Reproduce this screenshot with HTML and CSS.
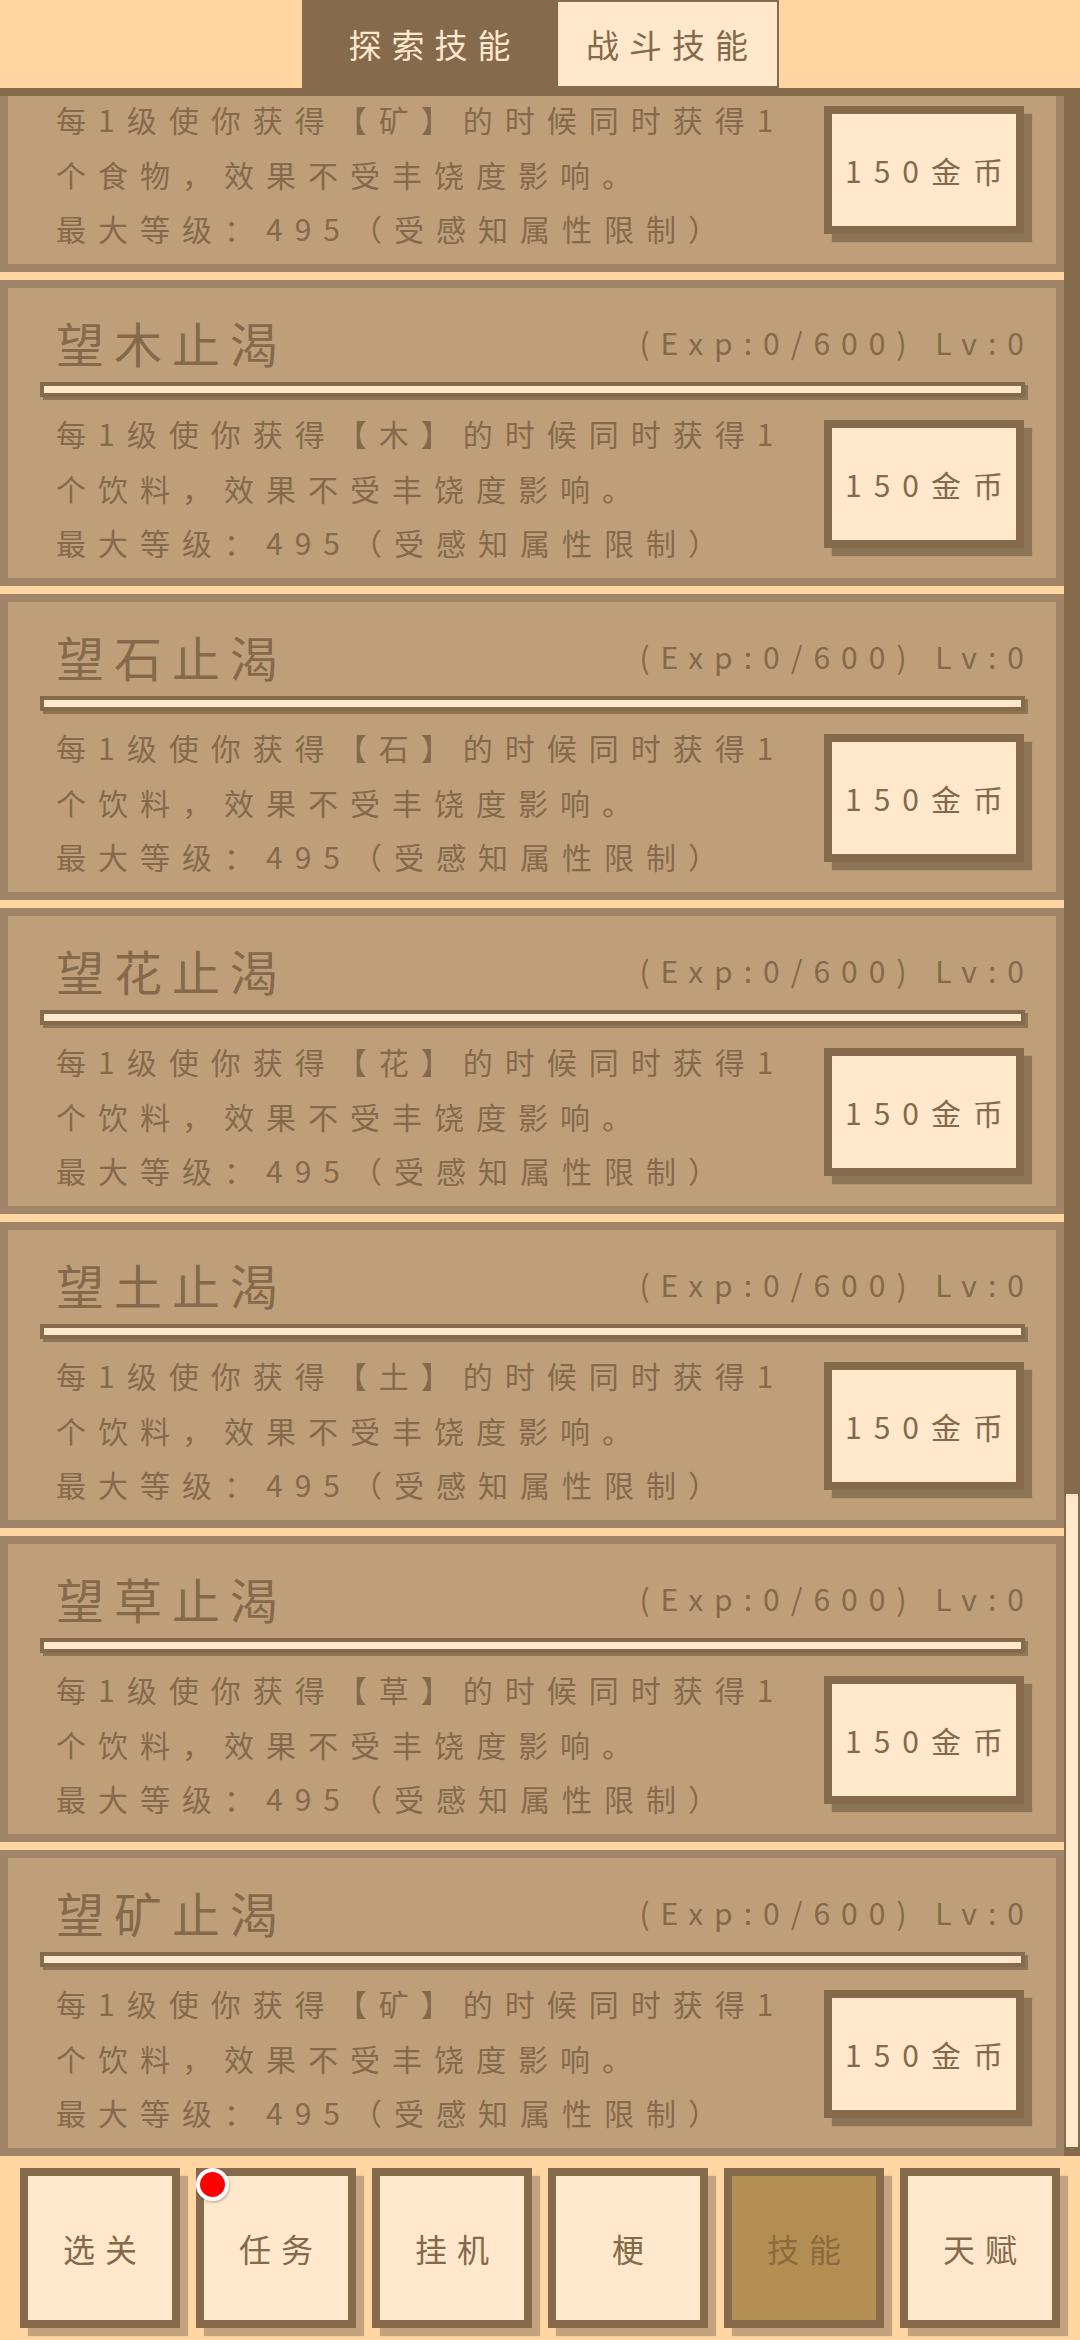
FILE: index.html
```html
<!DOCTYPE html>
<html lang="zh-CN">
<head>
<meta charset="utf-8">
<title>技能</title>
<link rel="stylesheet" href="styles.css">
</head>
<body>
<div class="app">
  <header class="tabs">
    <div class="tab-group">
      <div class="tab tab-active">探索技能</div>
      <div class="tab tab-idle">战斗技能</div>
    </div>
  </header>

  <main class="scroll">
    <div class="scroll-content">
      <section class="skill skill-partial">
        <div class="skill-body">
          <div class="skill-desc"><p class="desc-line">每1级使你获得【矿】的时候同时获得1个食物，效果不受丰饶度影响。</p><p class="desc-line">最大等级：495（受感知属性限制）</p></div>
          <div class="buy-btn">150金币</div>
        </div>
      </section>

      <section class="skill">
        <div class="skill-head"><div class="skill-name">望木止渴</div><div class="skill-exp">(Exp:0/600) Lv:0</div></div>
        <div class="skill-bar"></div>
        <div class="skill-body">
          <div class="skill-desc"><p class="desc-line">每1级使你获得【木】的时候同时获得1个饮料，效果不受丰饶度影响。</p><p class="desc-line">最大等级：495（受感知属性限制）</p></div>
          <div class="buy-btn">150金币</div>
        </div>
      </section>

      <section class="skill">
        <div class="skill-head"><div class="skill-name">望石止渴</div><div class="skill-exp">(Exp:0/600) Lv:0</div></div>
        <div class="skill-bar"></div>
        <div class="skill-body">
          <div class="skill-desc"><p class="desc-line">每1级使你获得【石】的时候同时获得1个饮料，效果不受丰饶度影响。</p><p class="desc-line">最大等级：495（受感知属性限制）</p></div>
          <div class="buy-btn">150金币</div>
        </div>
      </section>

      <section class="skill">
        <div class="skill-head"><div class="skill-name">望花止渴</div><div class="skill-exp">(Exp:0/600) Lv:0</div></div>
        <div class="skill-bar"></div>
        <div class="skill-body">
          <div class="skill-desc"><p class="desc-line">每1级使你获得【花】的时候同时获得1个饮料，效果不受丰饶度影响。</p><p class="desc-line">最大等级：495（受感知属性限制）</p></div>
          <div class="buy-btn">150金币</div>
        </div>
      </section>

      <section class="skill">
        <div class="skill-head"><div class="skill-name">望土止渴</div><div class="skill-exp">(Exp:0/600) Lv:0</div></div>
        <div class="skill-bar"></div>
        <div class="skill-body">
          <div class="skill-desc"><p class="desc-line">每1级使你获得【土】的时候同时获得1个饮料，效果不受丰饶度影响。</p><p class="desc-line">最大等级：495（受感知属性限制）</p></div>
          <div class="buy-btn">150金币</div>
        </div>
      </section>

      <section class="skill">
        <div class="skill-head"><div class="skill-name">望草止渴</div><div class="skill-exp">(Exp:0/600) Lv:0</div></div>
        <div class="skill-bar"></div>
        <div class="skill-body">
          <div class="skill-desc"><p class="desc-line">每1级使你获得【草】的时候同时获得1个饮料，效果不受丰饶度影响。</p><p class="desc-line">最大等级：495（受感知属性限制）</p></div>
          <div class="buy-btn">150金币</div>
        </div>
      </section>

      <section class="skill">
        <div class="skill-head"><div class="skill-name">望矿止渴</div><div class="skill-exp">(Exp:0/600) Lv:0</div></div>
        <div class="skill-bar"></div>
        <div class="skill-body">
          <div class="skill-desc"><p class="desc-line">每1级使你获得【矿】的时候同时获得1个饮料，效果不受丰饶度影响。</p><p class="desc-line">最大等级：495（受感知属性限制）</p></div>
          <div class="buy-btn">150金币</div>
        </div>
      </section>
    </div>
    <div class="scrollbar"><div class="scroll-thumb"></div></div>
  </main>

  <nav class="nav">
    <div class="nav-btn">选关</div>
    <div class="nav-btn">任务<span class="badge"></span></div>
    <div class="nav-btn">挂机</div>
    <div class="nav-btn">梗</div>
    <div class="nav-btn nav-btn-active">技能</div>
    <div class="nav-btn">天赋</div>
  </nav>
</div>
</body>
</html>
```

FILE: styles.css
```css
html, body {
  margin: 0;
  padding: 0;
}

body {
  background: #FFD6A1;
  font-family: "Noto Sans CJK SC", "Noto Sans", sans-serif;
  color: #85694B;
}

.app {
  width: 1080px;
  height: 2340px;
  display: flex;
  flex-direction: column;
  overflow: hidden;
}

/* ---------- top tabs ---------- */
.tabs {
  height: 88px;
  flex-shrink: 0;
  display: flex;
  justify-content: center;
}

.tab-group {
  display: flex;
  background: #856A4B;
  padding: 2px 2px 2px 0;
}

.tab {
  display: flex;
  align-items: center;
  justify-content: center;
  font-size: 33px;
  letter-spacing: 10px;
  padding-left: 10px;
  box-sizing: border-box;
}

.tab-active {
  width: 256px;
  color: #FFE8CC;
}

.tab-idle {
  width: 219px;
  background: #FFE8CC;
  color: #85694B;
}

/* ---------- scroll area ---------- */
.scroll {
  height: 2068px;
  flex-shrink: 0;
  box-sizing: border-box;
  border-top: 8px solid #856A4B;
  background: #856A4B;
  display: flex;
  overflow: hidden;
}

.scroll-content {
  width: 1064px;
  flex-shrink: 0;
  background: #FFD6A1;
  display: flex;
  flex-direction: column;
  gap: 8px;
}

.scrollbar {
  width: 16px;
  flex-shrink: 0;
  padding: 0 2px;
  box-sizing: border-box;
}

.scroll-thumb {
  margin-top: 1398px;
  height: 653px;
  background: #FFE8CC;
}

.skill {
  flex-shrink: 0;
  height: 306px;
  box-sizing: border-box;
  border: 8px solid #A08568;
  background: #BF9F7A;
  padding: 24px 32px 0 48px;
}

/* card scrolled partly out of view: only its lower part shows */
.skill-partial {
  height: 180px;
  border-top: 0;
  padding-top: 0;
  margin-top: -4px;
}

.skill-partial .skill-body {
  margin-top: 0;
}

.skill-head {
  height: 60px;
  display: flex;
  justify-content: space-between;
  align-items: center;
}

.skill-name {
  font-size: 48px;
  letter-spacing: 10px;
  line-height: 60px;
}

.skill-exp {
  font-size: 30px;
  letter-spacing: 11px;
  line-height: 60px;
  margin-right: -11px;
}

.skill-bar {
  height: 15px;
  box-sizing: border-box;
  margin: 10px -1px 0 -16px;
  border: 4px solid #856A4B;
  background: #FFE8CC;
  box-shadow: 3px 3px 0 #8E7557;
}

.skill-body {
  display: flex;
  margin-top: 9px;
}

.skill-desc {
  flex: 1;
  min-width: 0;
  font-size: 30px;
  letter-spacing: 12px;
  line-height: 54.5px;
}

.desc-line {
  margin: 0;
}

.buy-btn {
  width: 200px;
  height: 128px;
  flex-shrink: 0;
  margin-top: 14px;
  box-sizing: border-box;
  border: 8px solid #856A4B;
  background: #FFE8CC;
  box-shadow: 8px 8px 1px #8C7456;
  display: flex;
  align-items: center;
  justify-content: center;
  font-size: 30px;
  letter-spacing: 12px;
  padding-left: 12px;
  color: #85694B;
}

/* ---------- bottom nav ---------- */
.nav {
  height: 184px;
  flex-shrink: 0;
  box-sizing: border-box;
  padding: 12px 20px 0;
  display: flex;
  gap: 16px;
}

.nav-btn {
  position: relative;
  width: 160px;
  height: 160px;
  box-sizing: border-box;
  border: 8px solid #856A4B;
  background: #FFE8CC;
  box-shadow: 8px 8px 1px #C2A37E;
  display: flex;
  align-items: center;
  justify-content: center;
  font-size: 32px;
  letter-spacing: 10px;
  padding-left: 10px;
  color: #85694B;
}

.nav-btn-active {
  background: #B38E53;
  color: #8A6B3D;
}

.badge {
  position: absolute;
  top: -8px;
  left: -8px;
  width: 33px;
  height: 33px;
  box-sizing: border-box;
  border: 4px solid #ffffff;
  border-radius: 50%;
  background: #ff0000;
  box-shadow: 1px 2px 2px rgba(0, 0, 0, 0.2);
}
```
